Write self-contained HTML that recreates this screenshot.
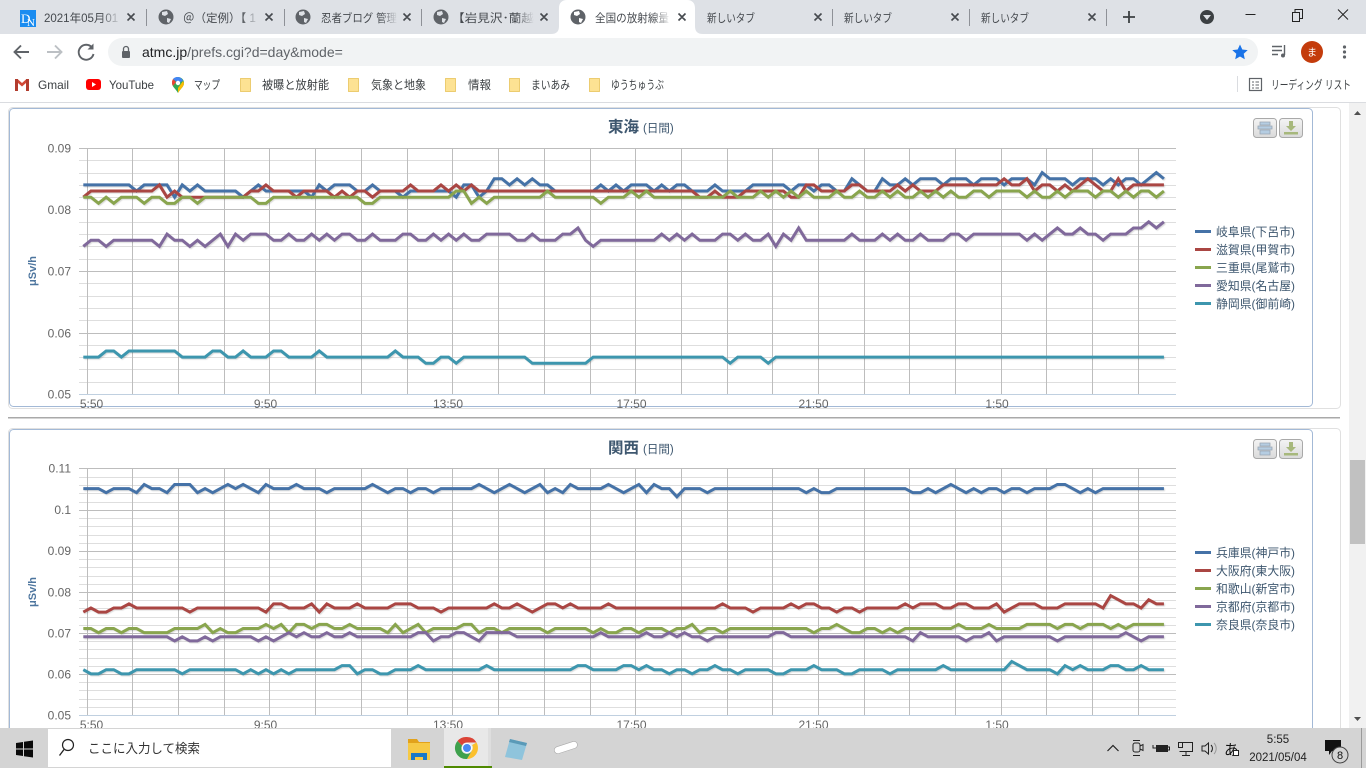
<!DOCTYPE html>
<html lang="ja"><head><meta charset="utf-8"><title>全国の放射線</title>
<style>
html,body{margin:0;padding:0;background:#fff;width:1366px;height:768px;overflow:hidden}
svg{display:block}
text{font-family:"Liberation Sans","Noto Sans CJK JP",sans-serif}
.t{font-size:11.5px;fill:#45494e}
.b{font-size:12px;fill:#3c4043}
.y{font-size:12px;fill:#666;text-anchor:end}
.x{font-size:12px;fill:#666;text-anchor:middle}
.l{font-size:12px;fill:#3e576f}
.minor{stroke:#dedede;stroke-width:1;fill:none}
.major{stroke:#bdbdbd;stroke-width:1;fill:none}
.s path{fill:none;stroke-width:3;vector-effect:non-scaling-stroke;stroke-linejoin:miter}
.sh{filter:drop-shadow(1px 1px .6px rgba(0,0,0,.15))}
.c{stroke:#45494e;stroke-width:1.6;fill:none}
</style></head><body>
<svg width="1366" height="768" viewBox="0 0 1366 768" xmlns="http://www.w3.org/2000/svg">
<defs>
<linearGradient id="fd" x1="0" x2="1" y1="0" y2="0"><stop offset="0" stop-color="#dee1e6" stop-opacity="0"/><stop offset="1" stop-color="#dee1e6"/></linearGradient>
<linearGradient id="fw" x1="0" x2="1" y1="0" y2="0"><stop offset="0" stop-color="#fff" stop-opacity="0"/><stop offset="1" stop-color="#fff"/></linearGradient>
<linearGradient id="bt" x1="0" x2="0" y1="0" y2="1"><stop offset="0" stop-color="#f4f4f4"/><stop offset="1" stop-color="#dadada"/></linearGradient>
</defs>

<!-- page -->
<rect x="0" y="103" width="1349" height="625" fill="#fff"/>
<!-- outer cards -->
<rect x="8.5" y="107.5" width="1332" height="301" rx="4" fill="#fff" stroke="#e0e0e0"/>
<rect x="8.5" y="428.5" width="1332" height="340" rx="4" fill="#fff" stroke="#e0e0e0"/>
<rect x="9.5" y="108.5" width="1303" height="298" rx="4" fill="#fff" stroke="#a3b9d6"/>
<rect x="9.5" y="429.5" width="1303" height="340" rx="4" fill="#fff" stroke="#a3b9d6"/>
<rect x="8" y="417" width="1332" height="1.5" fill="#a9a9a9"/>

<!-- chart 1 grid -->
<path class="minor" d="M79 160.5H1176M79 173.5H1176M79 185.5H1176M79 197.5H1176M79 222.5H1176M79 234.5H1176M79 246.5H1176M79 259.5H1176M79 283.5H1176M79 296.5H1176M79 308.5H1176M79 320.5H1176M79 345.5H1176M79 357.5H1176M79 369.5H1176M79 382.5H1176"/>
<path class="major" d="M79 148.5H1176M79 209.5H1176M79 271.5H1176M79 333.5H1176"/>
<path class="major" d="M87.5 148V394M132.5 148V394M178.5 148V394M224.5 148V394M269.5 148V394M315.5 148V394M361.5 148V394M407.5 148V394M452.5 148V394M498.5 148V394M544.5 148V394M590.5 148V394M635.5 148V394M681.5 148V394M727.5 148V394M772.5 148V394M818.5 148V394M864.5 148V394M909.5 148V394M955.5 148V394M1001.5 148V394M1046.5 148V394M1092.5 148V394M1138.5 148V394"/>
<path d="M79 394.5H1176" stroke="#c0d0e0" fill="none"/>

<!-- chart 2 grid -->
<path class="minor" d="M79 477.5H1176M79 485.5H1176M79 493.5H1176M79 502.5H1176M79 518.5H1176M79 526.5H1176M79 535.5H1176M79 543.5H1176M79 559.5H1176M79 567.5H1176M79 576.5H1176M79 584.5H1176M79 600.5H1176M79 608.5H1176M79 617.5H1176M79 625.5H1176M79 641.5H1176M79 649.5H1176M79 658.5H1176M79 666.5H1176M79 682.5H1176M79 690.5H1176M79 699.5H1176M79 707.5H1176"/>
<path class="major" d="M79 468.5H1176M79 510.5H1176M79 551.5H1176M79 592.5H1176M79 633.5H1176M79 674.5H1176"/>
<path class="major" d="M87.5 468V715M132.5 468V715M178.5 468V715M224.5 468V715M269.5 468V715M315.5 468V715M361.5 468V715M407.5 468V715M452.5 468V715M498.5 468V715M544.5 468V715M590.5 468V715M635.5 468V715M681.5 468V715M727.5 468V715M772.5 468V715M818.5 468V715M864.5 468V715M909.5 468V715M955.5 468V715M1001.5 468V715M1046.5 468V715M1092.5 468V715M1138.5 468V715"/>
<path d="M79 715.5H1176" stroke="#c0d0e0" fill="none"/>

<!-- chart 1 series -->
<g class="sh"><g class="s" transform="translate(83.3 701.5) scale(7.61 -6.15)">
<path stroke="#4572a7" d="M0 84H6L7 83 8 84H11L12 82 13 84 14 83 15 84 16 83H20L21 82 22 83 23 84 24 83H29L30 82 31 84 32 83 33 84H35L36 83H37L38 84 39 83H41L42 82 43 83H48L49 82 50 84H51L52 82 53 83 54 85H55L56 84 57 85 58 84 59 85 60 84H61L62 83H67L68 84 69 83 70 84 71 83 72 84H74L75 83 76 84 77 83 78 84H79L80 83H82L83 84 84 83H87L88 84H92L93 83 94 84H95L96 83 97 84H98L99 83H100L101 85 102 84 103 83H104L105 85 106 84H107L108 85 109 84 110 85H112L113 84 114 85H116L117 84 118 85H120L121 84 122 85H124L125 84 126 86 127 85H129L130 84 131 85H133L134 84 135 85 136 84 137 85H138L139 84 140 85 141 86 142 85"/>
<path stroke="#aa4643" d="M0 82L1 83H9L10 84 11 82 12 83 13 82H21L22 83H23L24 84 25 83H27L28 82 29 83H32L33 82 34 83 35 82 36 83H37L38 82 39 83H42L43 84 44 83H46L47 84 48 83 49 84 50 83 51 84 52 83H80L81 82H82L83 83 84 82H86L87 83H92L93 82H94L95 84H96L97 83H100L101 84H102L103 83H106L107 84 108 83 109 84 110 83H112L113 84H120L121 85 122 84H123L124 85 125 83 126 84H127L128 83 129 84 130 83 131 84 132 85 133 84 134 83H135L136 85 137 83 138 84H142"/>
<path stroke="#89a54e" d="M0 82H1L2 81 3 82 4 81 5 82H7L8 81 9 82H10L11 81H12L13 82H14L15 81 16 82H22L23 81H24L25 82H36L37 81H38L39 82H48L49 83H50L51 81 52 82 53 81 54 82H60L61 83 62 82H67L68 81 69 82H71L72 83 73 82 74 83 75 82H84L85 83 86 82H88L89 83 90 82 91 83 92 82 93 83 94 82 95 83 96 82H98L99 83 100 82H101L102 83 103 82H104L105 83 106 82 107 83 108 82H109L110 83 111 82 112 83 113 82 114 83 115 82H116L117 83H118L119 82 120 83H123L124 82 125 83 126 82H127L128 83 129 82 130 83H132L133 82 134 83H135L136 82 137 83 138 82 139 83H140L141 82 142 83"/>
<path stroke="#80699b" d="M0 74L1 75H2L3 74 4 75H9L10 74 11 76 12 75H13L14 74 15 75 16 74 17 75 18 76 19 74 20 76 21 75 22 76H24L25 75H26L27 76 28 75H29L30 76 31 75 32 76 33 75 34 76H35L36 75H37L38 76 39 75H41L42 76H43L44 75H45L46 76 47 75 48 76 49 75 50 76 51 75H52L53 76H56L57 75H58L59 76 60 75H62L63 76H64L65 77 66 75 67 74 68 75H75L76 76 77 75 78 76 79 75 80 76 81 75H83L84 76H85L86 75 87 76 88 75H89L90 76 91 74 92 76 93 75 94 77 95 75H100L101 76 102 75H104L105 76 106 75 107 76 108 75H109L110 76 111 75H113L114 76H115L116 75 117 76H123L124 75 125 76 126 75 127 76 128 77 129 76H130L131 77 132 76H133L134 75 135 76H137L138 77H139L140 78 141 77 142 78"/>
<path stroke="#3d96ae" d="M0 56H2L3 57H4L5 56 6 57H12L13 56H16L17 57H18L19 56H20L21 57 22 56H24L25 57H26L27 56H30L31 57 32 56H40L41 57 42 56H44L45 55H46L47 56H48L49 55 50 56H58L59 55H66L67 56H84L85 55 86 56H89L90 55 91 56H142"/>
</g></g>

<!-- chart 2 series -->
<g class="sh"><g class="s" transform="translate(83.3 920.85) scale(7.61 -4.117)">
<path stroke="#4572a7" d="M0 105H2L3 104 4 105H6L7 104 8 106 9 105H10L11 104 12 106H14L15 104 16 105 17 104 18 105 19 106 20 105 21 106 22 105 23 104 24 106 25 105H27L28 106 29 105H31L32 104 33 105H37L38 106 39 105 40 104 41 105H42L43 104 44 105H45L46 104 47 105H51L52 106 53 105 54 104 55 105 56 106 57 105 58 104 59 105 60 106 61 104 62 105 63 104 64 106 65 105H68L69 106 70 105 71 104 72 105 73 106 74 104 75 106 76 105H77L78 103 79 105H81L82 104 83 105H94L95 104 96 105 97 104H98L99 105H108L109 104H110L111 105 112 104 113 105 114 106 115 105 116 104 117 105 118 104 119 105H120L121 104 122 105H123L124 104 125 105H127L128 106H129L130 105 131 104 132 105 133 104 134 105H142"/>
<path stroke="#aa4643" d="M0 75L1 76 2 75H3L4 76H5L6 77 7 76H13L14 75 15 76H23L24 75 25 77H26L27 76H29L30 77 31 75 32 77 33 76H35L36 77 37 76H40L41 77H43L44 76H46L47 75 48 76H53L54 77 55 76H56L57 77 58 76 59 75 60 76 61 77H62L63 76 64 77 65 76H68L69 77 70 76H83L84 77 85 76H87L88 75 89 76H92L93 77 94 76 95 77H96L97 76H98L99 75 100 76H101L102 75 103 76H107L108 77 109 76 110 77H112L113 76H114L115 77H116L117 76H119L120 77 121 75 122 76 123 77H125L126 76H128L129 77H133L134 76 135 79 136 78 137 77H138L139 76 140 78 141 77H142"/>
<path stroke="#89a54e" d="M0 71H1L2 70 3 71H4L5 70 6 71H7L8 70H11L12 71H15L16 72 17 70 18 71 19 70H20L21 71H23L24 72 25 71 26 72 27 70 28 72H29L30 71 31 72H32L33 71H34L35 72 36 71H39L40 70 41 72 42 70 43 71 44 72 45 70 46 71H49L50 72H51L52 70 53 71H54L55 70 56 71H60L61 70 62 71H66L67 70 68 71 69 70H70L71 71H72L73 70 74 71H76L77 70 78 71H79L80 72 81 70 82 71H83L84 70 85 71H95L96 70 97 71H98L99 72 100 71 101 70H102L103 71H104L105 70 106 71 107 70 108 71H114L115 72 116 71H118L119 72 120 71H123L124 72H127L128 71 129 72H130L131 71 132 72H134L135 71 136 72 137 71 138 72H142"/>
<path stroke="#80699b" d="M0 69H11L12 68 13 69 14 68H15L16 69 17 68 18 69H22L23 68 24 69 25 68 26 69 27 70 28 69 29 70 30 69H31L32 70 33 69H34L35 70 36 69H43L44 70H45L46 68 47 69H48L49 70H50L51 69 52 68 53 70H56L57 69H67L68 70 69 69H73L74 70 75 69H76L77 70 78 69 79 70 80 69H81L82 68 83 69H90L91 70H92L93 69H108L109 68 110 70 111 69H115L116 68 117 69H118L119 70 120 68 121 69H127L128 68 129 69H136L137 70 138 69 139 68 140 69H142"/>
<path stroke="#3d96ae" d="M0 61L1 60H2L3 61H4L5 60H6L7 61H12L13 60 14 61H20L21 60 22 61 23 60 24 61 25 60 26 61 27 60 28 61H33L34 62H35L36 60 37 61H38L39 60H40L41 61H43L44 62 45 61H52L53 62 54 61H64L65 62H66L67 61H70L71 62H72L73 61 74 62 75 61H76L77 60 78 61H79L80 60 81 61H82L83 62 84 61H85L86 60 87 61H90L91 60H92L93 61H95L96 62 97 61H99L100 60H101L102 61H105L106 60 107 61H112L113 62 114 61H121L122 63 123 62 124 61H127L128 60 129 62 130 61 131 62 132 61H134L135 62H136L137 61H138L139 62 140 61H142"/>
</g></g>

<!-- chart text 1 -->
<text x="608" y="132" style="font-size:15.5px;font-weight:bold;fill:#3e576f">東海</text><text x="643" y="132" style="font-size:11.5px;fill:#3e576f">(日間)</text>
<text class="y" x="71" y="152.5">0.09</text><text class="y" x="71" y="214">0.08</text><text class="y" x="71" y="275.5">0.07</text><text class="y" x="71" y="337.5">0.06</text><text class="y" x="71" y="398.5">0.05</text>
<text class="x" x="91.5" y="408">5:50</text><text class="x" x="265.5" y="408">9:50</text><text class="x" x="448" y="408">13:50</text><text class="x" x="631.5" y="408">17:50</text><text class="x" x="813.5" y="408">21:50</text><text class="x" x="997" y="408">1:50</text>
<text transform="translate(36 271) rotate(-90)" text-anchor="middle" style="font-size:11px;font-weight:bold;fill:#4d759e">μSv/h</text>
<!-- chart text 2 -->
<text x="608" y="453" style="font-size:15.5px;font-weight:bold;fill:#3e576f">関西</text><text x="643" y="453" style="font-size:11.5px;fill:#3e576f">(日間)</text>
<text class="y" x="71" y="472.5">0.11</text><text class="y" x="71" y="514">0.1</text><text class="y" x="71" y="555">0.09</text><text class="y" x="71" y="596.5">0.08</text><text class="y" x="71" y="637.5">0.07</text><text class="y" x="71" y="678.5">0.06</text><text class="y" x="71" y="719.5">0.05</text>
<text class="x" x="91.5" y="729">5:50</text><text class="x" x="265.5" y="729">9:50</text><text class="x" x="448" y="729">13:50</text><text class="x" x="631.5" y="729">17:50</text><text class="x" x="813.5" y="729">21:50</text><text class="x" x="997" y="729">1:50</text>
<text transform="translate(36 592) rotate(-90)" text-anchor="middle" style="font-size:11px;font-weight:bold;fill:#4d759e">μSv/h</text>

<!-- legends -->
<g fill="none" stroke-width="3">
<path stroke="#4572a7" d="M1195 231.5H1211M1195 552.5H1211"/><path stroke="#aa4643" d="M1195 249.5H1211M1195 570.5H1211"/><path stroke="#89a54e" d="M1195 267.5H1211M1195 588.5H1211"/><path stroke="#80699b" d="M1195 285.5H1211M1195 606.5H1211"/><path stroke="#3d96ae" d="M1195 303.5H1211M1195 624.5H1211"/>
</g>
<g class="l">
<text class="l" x="1216" y="236" textLength="79" lengthAdjust="spacingAndGlyphs">岐阜県(下呂市)</text>
<text class="l" x="1216" y="254" textLength="79" lengthAdjust="spacingAndGlyphs">滋賀県(甲賀市)</text>
<text class="l" x="1216" y="272" textLength="79" lengthAdjust="spacingAndGlyphs">三重県(尾鷲市)</text>
<text class="l" x="1216" y="290" textLength="79" lengthAdjust="spacingAndGlyphs">愛知県(名古屋)</text>
<text class="l" x="1216" y="308" textLength="79" lengthAdjust="spacingAndGlyphs">静岡県(御前崎)</text>
<text class="l" x="1216" y="557" textLength="79" lengthAdjust="spacingAndGlyphs">兵庫県(神戸市)</text>
<text class="l" x="1216" y="575" textLength="79" lengthAdjust="spacingAndGlyphs">大阪府(東大阪)</text>
<text class="l" x="1216" y="593" textLength="79" lengthAdjust="spacingAndGlyphs">和歌山(新宮市)</text>
<text class="l" x="1216" y="611" textLength="79" lengthAdjust="spacingAndGlyphs">京都府(京都市)</text>
<text class="l" x="1216" y="629" textLength="79" lengthAdjust="spacingAndGlyphs">奈良県(奈良市)</text>
</g>

<!-- chart buttons -->
<g>
<rect x="1253.5" y="118.5" width="23" height="19" rx="3" fill="url(#bt)" stroke="#a9a9a9"/>
<rect x="1279.5" y="118.5" width="23" height="19" rx="3" fill="url(#bt)" stroke="#a9a9a9"/>
<path d="M1260 122h10v3h-10zM1258 126h14v3h-14zM1260 130h10v4h-10z" fill="#b5cde2" stroke="#9aa6b2" stroke-width=".8"/>
<path d="M1289 121h4v5h3l-5 5-5-5h3zM1284 132h14v2.5h-14z" fill="#a7b87c"/>
</g>
<g>
<rect x="1253.5" y="439.5" width="23" height="19" rx="3" fill="url(#bt)" stroke="#a9a9a9"/>
<rect x="1279.5" y="439.5" width="23" height="19" rx="3" fill="url(#bt)" stroke="#a9a9a9"/>
<path d="M1260 443h10v3h-10zM1258 447h14v3h-14zM1260 451h10v4h-10z" fill="#b5cde2" stroke="#9aa6b2" stroke-width=".8"/>
<path d="M1289 442h4v5h3l-5 5-5-5h3zM1284 453h14v2.5h-14z" fill="#a7b87c"/>
</g>

<!-- scrollbar -->
<rect x="1349" y="103" width="17" height="625" fill="#f1f1f1"/>
<rect x="1350" y="460" width="15" height="84" fill="#c1c1c1"/>
<path d="M1354 115l3.5-4 3.5 4z" fill="#505050"/>
<path d="M1354 717l3.5 4 3.5-4z" fill="#505050"/>

<!-- tab strip -->
<rect x="0" y="0" width="1366" height="34" fill="#dee1e6"/>
<rect x="0" y="34" width="1366" height="69" fill="#fff"/>
<path d="M551 34c6 0 8-3 8-8V8c0-5 3-8 8-8h120c5 0 8 3 8 8v18c0 5 2 8 8 8z" fill="#fff"/>
<path d="M146.5 9v17M284.5 9v17M421.5 9v17M832.5 9v17M969.5 9v17M1106.5 9v17" stroke="#8e9197" fill="none"/>
<!-- favicon -->
<rect x="20" y="10" width="16" height="17" fill="#1a8cf0"/>
<text x="21" y="23" style="font-size:13px;fill:#fff;font-family:'Liberation Serif',serif">D</text><text x="27" y="26" style="font-size:11px;fill:#fff;font-family:'Liberation Serif',serif">N</text>
<!-- globes -->
<g fill="#5f6368">
<circle cx="166" cy="17" r="7.5"/><circle cx="303" cy="17" r="7.5"/><circle cx="441" cy="17" r="7.5"/><circle cx="578" cy="17" r="7.5"/>
</g>
<g fill="#dee1e6">
<path d="M162 12l5-1 1 3-3 2-3-1zM167 18l4 1-2 4-2-1zM299 12l5-1 1 3-3 2-3-1zM304 18l4 1-2 4-2-1zM437 12l5-1 1 3-3 2-3-1zM442 18l4 1-2 4-2-1z"/>
<path d="M574 12l5-1 1 3-3 2-3-1zM579 18l4 1-2 4-2-1z" fill="#fff"/>
</g>
<text class="t" x="44" y="22">2021年05月01</text><rect x="100" y="8" width="22" height="20" fill="url(#fd)"/>
<text class="t" x="183" y="22">＠（定例）【 1</text><rect x="240" y="8" width="20" height="20" fill="url(#fd)"/>
<text class="t" x="321" y="22" textLength="76" lengthAdjust="spacingAndGlyphs">忍者ブログ 管理</text><rect x="380" y="8" width="18" height="20" fill="url(#fd)"/>
<text class="t" x="452" y="22" textLength="82" lengthAdjust="spacingAndGlyphs">【岩見沢･蘭越</text><rect x="516" y="8" width="18" height="20" fill="url(#fd)"/>
<text class="t" x="595" y="22" textLength="74" lengthAdjust="spacingAndGlyphs">全国の放射線量</text><rect x="652" y="8" width="20" height="20" fill="url(#fw)"/>
<text class="t" x="707" y="22" textLength="48" lengthAdjust="spacingAndGlyphs">新しいタブ</text>
<text class="t" x="844" y="22" textLength="48" lengthAdjust="spacingAndGlyphs">新しいタブ</text>
<text class="t" x="981" y="22" textLength="48" lengthAdjust="spacingAndGlyphs">新しいタブ</text>
<path class="c" d="M127.5 13.5l7 7m0-7l-7 7M265.5 13.5l7 7m0-7l-7 7M403.5 13.5l7 7m0-7l-7 7M540.5 13.5l7 7m0-7l-7 7M678.5 13.5l7 7m0-7l-7 7M814.5 13.5l7 7m0-7l-7 7M951.5 13.5l7 7m0-7l-7 7M1088.5 13.5l7 7m0-7l-7 7"/>
<path d="M1129 11v12M1123 17h12" stroke="#3c4043" stroke-width="1.8" fill="none"/>
<circle cx="1207" cy="17" r="7" fill="#3c4043"/><path d="M1203 15h8l-4 5z" fill="#dee1e6"/>
<path d="M1245.5 14.5h10" stroke="#222" fill="none"/>
<path d="M1292.5 12.5h7v9h-7zM1295 12.5v-3h7.5v9h-3" stroke="#222" fill="none"/>
<path d="M1338 9.5l10 10m0-10l-10 10" stroke="#222" fill="none"/>

<!-- toolbar -->
<path d="M29 52H15M21 45.5L14.5 52l6.5 6.5" stroke="#5f6368" stroke-width="1.9" fill="none"/>
<path d="M47 52H61M55 45.5L61.5 52 55 58.5" stroke="#bcc0c4" stroke-width="1.9" fill="none"/>
<path d="M92 47.5A7.5 7.5 0 1 0 93.5 54" stroke="#5f6368" stroke-width="1.9" fill="none"/><path d="M93.5 43.5v6h-6z" fill="#5f6368"/>
<rect x="108" y="38" width="1150" height="28" rx="14" fill="#f1f3f4"/>
<rect x="122" y="51" width="8" height="7" rx="1" fill="#5f6368"/><path d="M123.5 51v-2a2.5 2.5 0 0 1 5 0v2" stroke="#5f6368" stroke-width="1.3" fill="none"/>
<text x="142" y="57" style="font-size:14px;fill:#202124">atmc.jp<tspan fill="#5f6368">/prefs.cgi?d=day&amp;mode=</tspan></text>
<path d="M1240 44.5l2.300 5 5.400.6-4 3.700 1.100 5.400-4.800-2.700-4.800 2.700 1.100-5.400-4-3.700 5.400-.6z" fill="#1a73e8"/>
<path d="M1272 46.5h10M1272 50.5h10M1272 54.5h6" stroke="#5f6368" stroke-width="1.4" fill="none"/><path d="M1284.5 45v10" stroke="#5f6368" stroke-width="1.4"/><circle cx="1283" cy="55.5" r="2" fill="#5f6368"/>
<circle cx="1312" cy="52" r="11" fill="#c43c0c"/><text x="1312" y="56" text-anchor="middle" style="font-size:10px;fill:#fff">ま</text>
<circle cx="1344.5" cy="47" r="1.6" fill="#5f6368"/><circle cx="1344.5" cy="52" r="1.6" fill="#5f6368"/><circle cx="1344.5" cy="57" r="1.6" fill="#5f6368"/>

<!-- bookmarks -->
<path d="M15 79h2.500L22 83l4.500-4H29v12h-3v-8l-4 3.500-4-3.500v8h-3z" fill="#d14836"/><path d="M15 79h3v12h-3zM26 79h3v12h-3z" fill="#b23c2e"/>
<text class="b" x="38" y="89" textLength="31" lengthAdjust="spacingAndGlyphs">Gmail</text>
<rect x="86" y="79" width="15" height="11" rx="3" fill="#f00"/><path d="M92 82v5l4-2.500z" fill="#fff"/>
<text class="b" x="109" y="89" textLength="45" lengthAdjust="spacingAndGlyphs">YouTube</text>
<path d="M178 77a6 6 0 0 0-6 6c0 4 4 6 6 10 2-4 6-6 6-10a6 6 0 0 0-6-6z" fill="#34a853"/><path d="M173 79l5 4 5-2a6 6 0 0 0-5-4 6 6 0 0 0-5 2z" fill="#4285f4"/><path d="M172 83c0 1 .5 2 1 3l3-4-3-3a6 6 0 0 0-1 4z" fill="#ea4335"/><path d="M178 93c2-4 6-6 6-10l-1-2-5 7z" fill="#fbbc04"/><circle cx="178" cy="83" r="2.200" fill="#fff"/>
<text class="b" x="194" y="89" textLength="26" lengthAdjust="spacingAndGlyphs">マップ</text>
<g fill="#fde293" stroke="#e8c45a" stroke-width=".8">
<rect x="240.5" y="78.5" width="10" height="13"/><rect x="348.5" y="78.5" width="10" height="13"/><rect x="445.5" y="78.5" width="10" height="13"/><rect x="509.5" y="78.5" width="10" height="13"/><rect x="589.5" y="78.5" width="10" height="13"/>
</g>
<text class="b" x="262" y="89" textLength="67" lengthAdjust="spacingAndGlyphs">被曝と放射能</text>
<text class="b" x="371" y="89" textLength="55" lengthAdjust="spacingAndGlyphs">気象と地象</text>
<text class="b" x="468" y="89" textLength="23" lengthAdjust="spacingAndGlyphs">情報</text>
<text class="b" x="531" y="89" textLength="39" lengthAdjust="spacingAndGlyphs">まいあみ</text>
<text class="b" x="611" y="89" textLength="53" lengthAdjust="spacingAndGlyphs">ゆうちゅうぶ</text>
<path d="M1237.5 76v16" stroke="#dadce0" fill="none"/>
<rect x="1249.5" y="78.5" width="12" height="12" fill="none" stroke="#5f6368" stroke-width="1.2"/><path d="M1252 82h2M1255.5 82h3.5M1252 85h2M1255.5 85h3.5M1252 88h2M1255.5 88h3.5" stroke="#5f6368"/>
<text class="b" x="1271" y="89" textLength="80" lengthAdjust="spacingAndGlyphs">リーディング リスト</text>
<rect x="0" y="102" width="1366" height="1" fill="#dadce0"/>

<!-- taskbar -->
<rect x="0" y="728" width="1366" height="40" fill="#d4d4d4"/>
<path d="M16 743l7-1v6.500h-7zM24 741.800l9-1.300v8h-9zM16 749.500h7v6.500l-7-1zM24 749.500h9v8l-9-1.300z" fill="#0a0a0a"/>
<rect x="48" y="729" width="343" height="38" fill="#fff"/>
<circle cx="68" cy="745" r="5.5" fill="none" stroke="#222" stroke-width="1.2"/><path d="M64 749.500l-4.500 6" stroke="#222" stroke-width="1.3" fill="none"/>
<text x="88" y="753" textLength="112" lengthAdjust="spacingAndGlyphs" style="font-size:13px;fill:#333">ここに入力して検索</text>
<path d="M408 739h9l2 3h11v5h-22z" fill="#e2a21b"/><rect x="408" y="743" width="22" height="17" fill="#f6c945"/><path d="M411 760v-7h16v7h-4v-3h-8v3z" fill="#1878c8"/>
<rect x="444" y="728" width="44" height="40" fill="#e8e8e8"/><rect x="488" y="728" width="3" height="40" fill="#dedede"/>
<rect x="444" y="766" width="48" height="2" fill="#4f8a00"/>
<path d="M467 737a11 11 0 0 1 9.500 5.500H467a5.500 5.500 0 0 0-5 3.100l-4.500-4.600A11 11 0 0 1 467 737z" fill="#db4437"/>
<path d="M476.500 742.500A11 11 0 0 1 467 759l4.700-8a5.500 5.500 0 0 0 .4-6z" fill="#fbc02d"/>
<path d="M457.500 741a11 11 0 0 0 9.500 18l4.700-8a5.500 5.500 0 0 1-9.700-5.400z" fill="#3fa14d"/>
<circle cx="467" cy="748" r="5" fill="#fff"/><circle cx="467" cy="748" r="4" fill="#4a89f3"/>
<path d="M510 739l17 4-5 17-17-3z" fill="#8fc4dc"/><path d="M510 739l17 4-1 3-17-4z" fill="#5a9ab8"/>
<rect x="554" y="744" width="24" height="7" rx="3.5" transform="rotate(-18 566 748)" fill="#fff" stroke="#aaa" stroke-width=".6"/>
<path d="M1107.5 751l5.500-5.500 5.500 5.500" stroke="#222" stroke-width="1.2" fill="none"/>
<rect x="1133" y="743" width="7" height="9" rx="2" fill="none" stroke="#222"/><path d="M1140 746l3-1.500v6l-3-1.500M1133 740.500h7M1133 755.500h7" stroke="#222" fill="none"/>
<rect x="1156" y="745" width="12" height="7" fill="#222"/><path d="M1153 745v3h3M1168 747h1.500v3H1168" stroke="#222" fill="none"/>
<rect x="1178.5" y="742.5" width="4" height="5" fill="none" stroke="#222"/><path d="M1182.500 742.500h10v9h-13M1186 751.500v4M1182 755.500h8" stroke="#222" fill="none"/>
<path d="M1202 746h3l3.500-3v11l-3.500-3h-3zM1211 745a5 5 0 0 1 0 7" stroke="#222" fill="none"/><path d="M1214 743a8 8 0 0 1 0 11" stroke="#999" fill="none"/>
<text x="1224" y="755" style="font-size:15px;fill:#111">あ</text><rect x="1233.5" y="750.5" width="5" height="5" fill="#fff" stroke="#222"/>
<text x="1278" y="743" text-anchor="middle" style="font-size:11.5px;fill:#222">5:55</text>
<text x="1278" y="761" text-anchor="middle" style="font-size:11.5px;fill:#222">2021/05/04</text>
<path d="M1325 740h16v11h-9l-3 4v-4h-4z" fill="#111"/>
<circle cx="1340" cy="755" r="8" fill="#d4d4d4" stroke="#444"/><text x="1340" y="759" text-anchor="middle" style="font-size:11px;fill:#111">8</text>
<rect x="1361" y="728" width="1" height="40" fill="#9a9a9a"/>
</svg>
</body></html>
